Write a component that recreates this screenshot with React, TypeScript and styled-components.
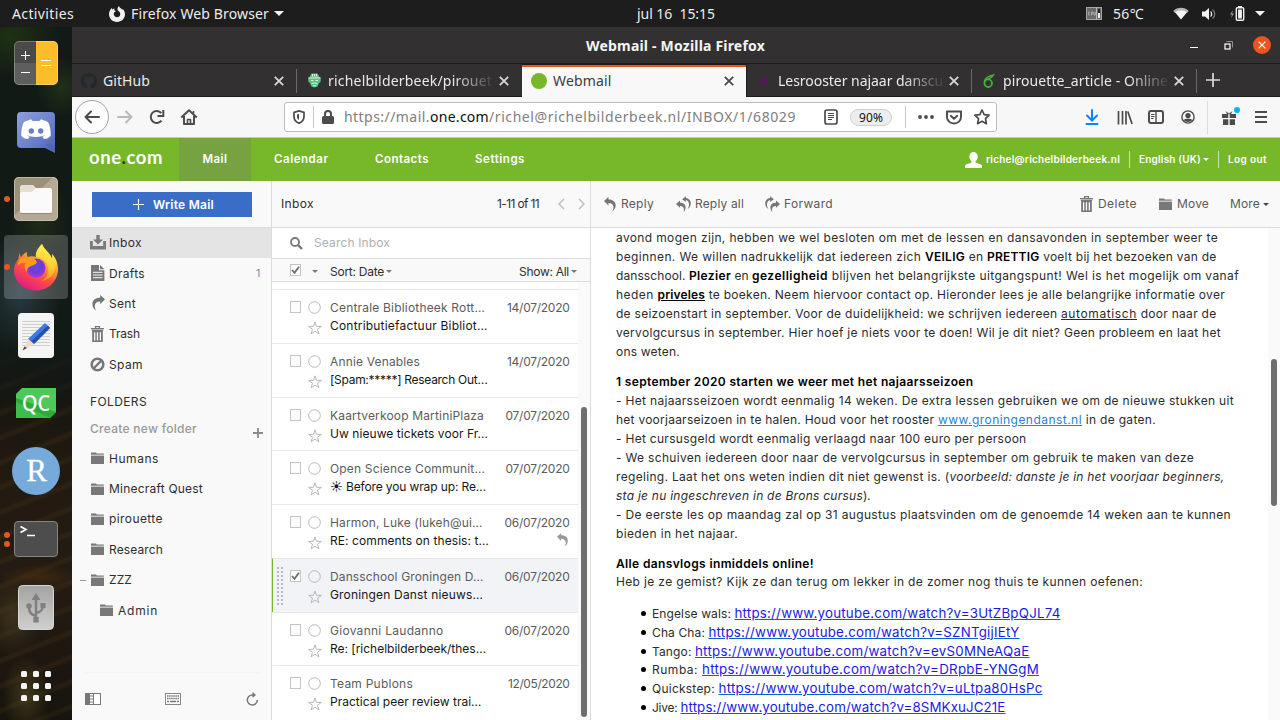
import React, { useLayoutEffect, useRef } from "react";
import styled, { createGlobalStyle, css } from "styled-components";

const SYSTEM = '"Noto Sans", "Open Sans", sans-serif';
const MAIL = 'Inter, "DejaVu Sans", sans-serif';

const Global = createGlobalStyle`
  * { box-sizing: border-box; }
  html, body { margin: 0; padding: 0; }
  body { width: 1280px; height: 720px; overflow: hidden; background: #1d1d1d; }
  svg { display: block; flex: none; }
`;

/* ---------- text that is tracked to an exact width ---------- */

const FitSpan = styled.span<{ $ml?: number }>`
  display: inline-block;
  flex: none;
  white-space: pre;
  margin-left: ${(p) => p.$ml || 0}px;
`;

type FitProps = {
  w: number;
  ml?: number;
  as?: any;
  children: React.ReactNode;
};

function Fit({ w, ml, as, children }: FitProps) {
  const ref = useRef<HTMLSpanElement>(null);
  useLayoutEffect(() => {
    const el = ref.current;
    if (!el) return;
    const n = (el.textContent || "").length || 1;
    let spacing = 0;
    for (let i = 0; i < 3; i++) {
      spacing += (w - el.getBoundingClientRect().width) / n;
      el.style.letterSpacing = `${spacing}px`;
    }
  }, [w]);
  return (
    <FitSpan ref={ref} $ml={ml} as={as}>
      {children}
    </FitSpan>
  );
}

/* ---------- desktop ---------- */

const Desktop = styled.div`
  width: 1280px;
  height: 720px;
  display: flex;
  flex-direction: column;
  overflow: hidden;
`;

const TopBar = styled.header`
  height: 27px;
  flex: none;
  display: flex;
  align-items: center;
  background: #1d1d1d;
  color: #ececec;
  font: 14px/26px ${SYSTEM};
`;

const Cell = styled.div<{ $w: number; $ml?: number }>`
  width: ${(p) => p.$w}px;
  flex: none;
  margin-left: ${(p) => p.$ml || 0}px;
  display: flex;
  justify-content: center;
  align-items: center;
  position: relative;
`;

const Below = styled.div`
  display: flex;
  height: 693px;
`;

const Dock = styled.nav`
  width: 72px;
  flex: none;
  padding-top: 2px;
  overflow: hidden;
  background:
    radial-gradient(ellipse 30px 40px at 40px 195px, rgba(44, 66, 24, 0.45), transparent),
    radial-gradient(ellipse 42px 60px at 20px 265px, rgba(58, 84, 100, 0.55), transparent),
    radial-gradient(ellipse 50px 40px at 10px 10px, rgba(40, 70, 16, 0.55), transparent),
    radial-gradient(ellipse 26px 30px at 62px 60px, rgba(46, 76, 22, 0.45), transparent),
    radial-gradient(ellipse 30px 40px at 14px 590px, rgba(78, 66, 34, 0.6), transparent),
    radial-gradient(ellipse 24px 40px at 26px 668px, rgba(98, 86, 36, 0.5), transparent),
    radial-gradient(ellipse 40px 12px at 40px 550px, rgba(100, 56, 18, 0.4), transparent),
    linear-gradient(rgba(18, 26, 22, 1) 0, rgba(18, 26, 22, 1) 320px, rgba(18, 26, 22, 0) 400px),
    repeating-linear-gradient(158deg, rgba(0, 0, 0, 0) 0 9px, rgba(90, 64, 28, 0.2) 12px 14px, rgba(0, 0, 0, 0) 17px 23px),
    linear-gradient(#12200f 0, #10180f 30%, #121a1d 44%, #16140f 50%, #211a10 64%, #241c12 80%, #17130e 100%);
`;

const DockSlot = styled.div<{ $last?: boolean }>`
  height: 68px;
  margin-top: ${(p) => (p.$last ? 11 : 0)}px;
  display: grid;
  grid-template-columns: 4px 64px 4px;
  align-items: center;
`;

const DockTile = styled.div<{ $active?: boolean }>`
  grid-column: 2;
  height: 64px;
  border-radius: 4px;
  background: ${(p) => (p.$active ? "rgba(255,255,255,0.2)" : "transparent")};
  display: flex;
  align-items: center;
  justify-content: center;
  position: relative;
`;

const DockDots = styled.div`
  position: absolute;
  left: 0;
  top: 0;
  height: 64px;
  display: flex;
  flex-direction: column;
  justify-content: center;
  gap: 3px;
`;

const DockDot = styled.i`
  width: 6px;
  height: 6px;
  border-radius: 50%;
  background: #e95420;
`;

/* ---------- browser window ---------- */

const Window = styled.main`
  width: 1208px;
  display: flex;
  flex-direction: column;
`;

const TitleBar = styled.div`
  height: 37px;
  flex: none;
  display: flex;
  align-items: center;
  background: #333031;
  border-bottom: 1px solid #1f1d1e;
  color: #f4f4f4;
  font: 700 14px/36px ${SYSTEM};
`;

const TitleText = styled.div`
  margin-left: 514px;
  padding-top: 1px;
`;

const CloseButton = styled.div`
  width: 18px;
  height: 18px;
  border-radius: 50%;
  background: #e95420;
  display: flex;
  align-items: center;
  justify-content: center;
`;

const TabStrip = styled.div`
  height: 33px;
  flex: none;
  display: flex;
  background: #333031;
  border-bottom: 1px solid #1c1a1b;
`;

const TabBox = styled.div<{ $active?: boolean }>`
  width: 225px;
  height: 33px;
  flex: none;
  display: grid;
  grid-template-columns: 9px 16px 6px 166px 20px 7px 1px;
  align-items: center;
  font: 14px/32px ${SYSTEM};
  color: #e9e9e9;
  ${(p) =>
    p.$active &&
    css`
      background: #f8f8f8;
      color: #3c3c3c;
      box-shadow: inset 0 1px #1d1b1c, inset -1px 0 #1d1b1c, inset 0 3px #e95420;
    `}
`;

const TabLabel = styled.div<{ $fade?: boolean }>`
  grid-column: 4;
  height: 32px;
  ${(p) => p.$fade && "mask-image: linear-gradient(to right, #000 125px, transparent 168px);"}
`;

const TabSep = styled.i<{ $on?: boolean }>`
  height: 24px;
  grid-column: 7;
  background: ${(p) => (p.$on ? "#6b696a" : "transparent")};
`;

const Toolbar = styled.div`
  height: 41px;
  flex: none;
  display: flex;
  align-items: center;
  background: #f7f7f7;
  border-bottom: 1px solid #c6c6c6;
  color: #555;
`;

const BackButton = styled.div`
  width: 34px;
  height: 34px;
  margin-left: 3px;
  border-radius: 50%;
  border: 1px solid #a5a5a5;
  background: #fdfdfd;
  display: flex;
  align-items: center;
  justify-content: center;
`;

const UrlBox = styled.div`
  width: 713px;
  height: 30px;
  margin-left: 86px;
  display: flex;
  align-items: center;
  background: #fff;
  border: 1px solid #bdbdbd;
  border-radius: 3px;
  color: #808080;
  font: 14px/28px ${SYSTEM};
  b { font-weight: 400; color: #0c0c0d; }
`;

const VLine = styled.i<{ $h: number; $ml?: number; $c?: string }>`
  width: 1px;
  flex: none;
  height: ${(p) => p.$h}px;
  margin-left: ${(p) => p.$ml || 0}px;
  background: ${(p) => p.$c || "#c9c9c9"};
`;

const Zoom = styled.div`
  width: 42px;
  height: 17px;
  margin-left: 12px;
  border-radius: 9px;
  border: 1px solid #cfcfcf;
  background: #ededed;
  color: #111;
  display: flex;
  justify-content: center;
  font: 12px/15px ${SYSTEM};
`;

const GiftDot = styled.i`
  position: absolute;
  right: -3px;
  top: -3px;
  width: 6px;
  height: 6px;
  border-radius: 50%;
  background: #00b3f4;
`;

/* ---------- webmail ---------- */

const GreenBar = styled.div`
  height: 43px;
  flex: none;
  display: flex;
  align-items: center;
  background: #76b82a;
  color: #fff;
  font: 600 11.5px/43px ${MAIL};
`;

const Logo = styled.div`
  width: 107px;
  padding: 0 0 4px 17px;
  font: 700 18.5px/39px Lato, sans-serif;
  i { color: #333; font-style: normal; }
`;

const NavItem = styled.div<{ $w: number; $active?: boolean }>`
  width: ${(p) => p.$w}px;
  height: 43px;
  display: flex;
  justify-content: center;
  background: ${(p) => (p.$active ? "#77a241" : "transparent")};
`;

const Account = styled.div`
  display: flex;
  align-items: center;
  font-size: 10px;
  margin-left: 428px;
`;

const MailApp = styled.div`
  height: 539px;
  display: flex;
  font: 12px/14px ${MAIL};
  color: #2e2e2e;
`;

const Sidebar = styled.aside`
  width: 200px;
  flex: none;
  display: flex;
  flex-direction: column;
  background: #f9f9f9;
  border-right: 1px solid #dcdcdc;
`;

const ComposeArea = styled.div`
  height: 47px;
  padding: 11px 0 0 20px;
  border-bottom: 1px solid #dcdcdc;
`;

const WriteButton = styled.div`
  width: 160px;
  height: 25px;
  display: flex;
  align-items: center;
  background: #3a6dc7;
  color: #fff;
  font-weight: 600;
`;

const Item = styled.div<{ $active?: boolean; $indent?: boolean }>`
  height: 30.4px;
  flex: none;
  display: grid;
  grid-template-columns: ${(p) => (p.$indent ? 26 : 17)}px 20px 144px;
  align-items: center;
  background: ${(p) => (p.$active ? "#e4e4e4" : "transparent")};
`;

const ItemIcon = styled.div`
  display: flex;
  justify-content: center;
  align-items: center;
  margin: -1px 2px 0 -1px;
`;

const ItemBody = styled.div`
  display: flex;
  align-items: center;
`;

const Count = styled.span`
  margin: 0 -9px 0 auto;
  width: 6px;
  color: #6c8fb0;
  font-size: 10.5px;
`;

const FolderTitle = styled.div`
  height: 27px;
  padding-left: 18px;
  margin-top: 8px;
  line-height: 28px;
`;

const CreateRow = styled.div`
  height: 28.5px;
  display: flex;
  padding-left: 18px;
  line-height: 27px;
  color: #989898;
  font-weight: 500;
  svg { margin: 13px 0 0 56px; }
`;

const SideFooter = styled.div`
  height: 48px;
  margin: auto 10px 0 13px;
  padding-top: 4px;
  display: grid;
  grid-template-columns: 80px 80px 16px;
  align-items: center;
  border-top: 1px solid #f4f4f4;
`;

const ListPane = styled.section`
  width: 319px;
  flex: none;
  display: flex;
  flex-direction: column;
  background: #fff;
  border-right: 1px solid #dcdcdc;
`;

const ListHead = styled.div`
  height: 47px;
  flex: none;
  display: flex;
  align-items: center;
  background: #f9f9f9;
  border-bottom: 1px solid #dcdcdc;
`;

const SearchRow = styled.div`
  height: 31px;
  flex: none;
  display: flex;
  align-items: center;
  border-bottom: 1px solid #dcdcdc;
  color: #b0b0b0;
`;

const SortRow = styled.div`
  height: 23px;
  flex: none;
  display: flex;
  align-items: center;
  background: #f9f9f9;
  border-bottom: 1px solid #dcdcdc;
  padding-top: 3px;
`;

const SortCheck = styled.div`
  width: 11px;
  margin: -4px 0 0 18px;
`;

const ListBody = styled.div`
  display: flex;
  height: 438px;
`;

const Rows = styled.div`
  width: 306px;
  padding-top: 7px;
`;

const Row = styled.div<{ $sel?: boolean }>`
  height: 53.75px;
  border-top: 1px solid #e8e8e8;
  border-left: 1px solid ${(p) => (p.$sel ? "#76b82a" : "transparent")};
  background: ${(p) => (p.$sel ? "#f2f3f7" : "#fff")};
  display: grid;
  grid-template-columns: 17px 12px 5px 15px 8px 159px 80.5px;
  grid-template-rows: 27px 18px;
`;

const Grip = styled.div`
  grid-row: 1 / 3;
  width: 6px;
  height: 38px;
  margin: 8px 0 0 4px;
  background-image: linear-gradient(#bcbcbc 2px, transparent 2px);
  background-size: 6px 4px;
  mask-image: linear-gradient(to right, #000 2px, transparent 2px 4px, #000 4px);
`;

const Check = styled.div`
  width: 11px;
  height: 12px;
  border: 1px solid #c4c4c4;
  background: #fcfcfc;
`;

const CheckCell = styled.div`
  grid-column: 2;
  grid-row: 1;
  padding-top: 11px;
`;

const MarkCell = styled.div<{ $row: number }>`
  grid-column: 4;
  grid-row: ${(p) => p.$row};
  display: flex;
  justify-content: center;
  padding-top: ${(p) => (p.$row === 1 ? 11 : 4)}px;
`;

const From = styled.div`
  grid-column: 6;
  grid-row: 1;
  padding-top: 11px;
  color: #5c5c5c;
`;

const Subject = styled.div`
  grid-column: 6;
  grid-row: 2;
  padding-top: 2px;
  color: #161616;
`;

const DateCell = styled.div`
  grid-column: 7;
  grid-row: 1;
  padding-top: 11px;
  text-align: right;
  color: #5c5c5c;
`;

const Replied = styled.div`
  grid-column: 7;
  grid-row: 2;
  display: flex;
  justify-content: flex-end;
  padding: 1px 1px 0 0;
`;

const Track = styled.div`
  width: 12px;
  background: #fafafa;
`;

const Thumb = styled.div<{ $top: number; $h: number }>`
  width: 6px;
  height: ${(p) => p.$h}px;
  margin: ${(p) => p.$top}px 0 0 3px;
  border-radius: 3px;
  background: #6e6e6e;
`;

const Reader = styled.section`
  width: 689px;
  display: flex;
  flex-direction: column;
  background: #fff;
`;

const Actions = styled.div`
  height: 47px;
  flex: none;
  display: flex;
  align-items: center;
  background: #f9f9f9;
  border-bottom: 1px solid #dcdcdc;
  color: #5a5a5a;
`;

const ReaderBody = styled.div`
  height: 492px;
  display: flex;
  overflow: hidden;
`;

const Article = styled.article`
  width: 677px;
  padding: 1px 0 0 25px;
  color: #2b2b2b;
  font: 12px/18.95px ${MAIL};
`;

const Block = styled.div<{ $mt?: number }>`
  margin-top: ${(p) => p.$mt || 0}px;
`;

const Line = styled.div`
  height: 18.95px;
  display: flex;
  white-space: pre;
`;

const Strong = styled.b`
  font-weight: 600;
  color: #000;
`;

const Under = styled.span`
  display: inline-block;
  text-decoration: underline;
`;

const StrongUnder = styled(Strong)`
  display: inline-block;
  text-decoration: underline;
`;

const Site = styled.a`
  color: #2a7fd0;
  text-decoration: underline;
`;

const Video = styled.a`
  font-size: 13.3px;
  color: #1a1ae6;
  text-decoration: underline;
  text-decoration-color: #0563c1;
`;

const BulletLine = styled.li`
  height: 18.85px;
  display: flex;
  align-items: baseline;
  list-style: none;
  &::before {
    content: "";
    width: 5px;
    height: 5px;
    margin: 0 6px 0 25px;
    border-radius: 50%;
    background: #000;
    transform: translateY(-2px);
  }
`;

const Bullets = styled.ul`
  margin: 11.5px 0 0;
  padding: 0;
`;

/* ---------- icons ---------- */

const Caret = ({ s = 6, c = "#777" }: { s?: number; c?: string }) => (
  <svg width={s} height={s / 2} viewBox="0 0 6 3">
    <path d="M0 0h6L3 3z" fill={c} />
  </svg>
);

const Cross = ({ c = "#e0e0e0", s = 10, w = 1.8 }: { c?: string; s?: number; w?: number }) => (
  <svg width={s} height={s} viewBox="0 0 10 10">
    <path d="M.8.8l8.4 8.4M9.2.8L.8 9.2" stroke={c} strokeWidth={w} />
  </svg>
);

const FolderIcon = () => (
  <svg width="13" height="12" viewBox="0 0 13 12">
    <path d="M0 1.2V0.4h5l.8 1h7v1.4H0z" fill="#787878" />
    <path d="M0 2.9h13v1H0z" fill="#bdbdbd" />
    <path d="M0 4h13v8H0z" fill="#787878" />
  </svg>
);

const TrashIcon = () => (
  <svg width="13" height="16" viewBox="0 0 13 16">
    <path d="M4.5 2V.6h4V2M0 2.600h13M.8 4.400h11.400" fill="none" stroke="#777" strokeWidth="1.2" />
    <path d="M1.200 5h10.600v11H1.200zM3 6.200v8.200h1.300V6.200zm2.800 0v8.200h1.300V6.200zm2.900 0v8.200H10V6.200z" fill="#777" fillRule="evenodd" />
  </svg>
);

const BanIcon = () => (
  <svg width="15" height="15" viewBox="0 0 15 15">
    <circle cx="7.5" cy="7.5" r="5.8" fill="none" stroke="#777" strokeWidth="2.6" />
    <path d="M11.500 3.500l-8 8" stroke="#777" strokeWidth="2.400" />
  </svg>
);

const InboxIcon = () => (
  <svg width="16" height="15" viewBox="0 0 16 15">
    <path d="M6.300 0h3.400v4.600H13L8 9.600 3 4.600h3.300z" fill="#7a7a7a" />
    <path d="M0 6h2.800v5h10.400V6H16v8.600H0z" fill="#7a7a7a" />
  </svg>
);

const DraftIcon = () => (
  <svg width="14" height="16" viewBox="0 0 14 16">
    <path d="M0 0h8v5.200h5.400V16H0z" fill="#777" />
    <path d="M9 0l4.400 4.300H9z" fill="#777" />
    <path d="M2 7.300h9.500M2 10h9.500M2 12.700h9.500" stroke="#f9f9f9" strokeWidth="1" />
  </svg>
);

const ReplyIcon = ({ flip, s = 14, c = "#757575" }: { flip?: boolean; s?: number; c?: string }) => (
  <svg width={s} height={(s * 16) / 14} viewBox="0 0 14 16">
    <path
      transform={flip ? "translate(14 0) scale(-1 1)" : undefined}
      d="M0 4.300L4.800 0v2.700c5 0 7.800 2.600 7.800 6.300 0 3-1.600 5.400-3.900 6.600 1.200-1.700 1.700-3.200 1.500-5-.3-2.600-2.200-4-5.400-4v2.600z"
      fill={c}
    />
  </svg>
);

const DoubleReply = ({ flip }: { flip?: boolean }) => (
  <svg width="15" height="16" viewBox="0 0 15 16">
    <g transform={flip ? "translate(15 0) scale(-1 1)" : undefined} fill="#757575">
      <path d="M0 8L4 4.600v2.200c3.600 0 5.600 1.900 5.600 4.700 0 1.900-.8 3.500-2 4.500.5-1.400.5-2.900.1-4-.5-1.300-1.700-2-3.700-2.100v1.800z" />
      <path d="M6.200 3.300L9.800.2v1.700c3.200.3 5 2.500 5 5.300 0 2.600-1.300 4.700-3.200 5.800 1-1.700 1.600-3.400 1.400-5.300-.3-2-1.300-3.400-3.200-3.800v2z" />
    </g>
  </svg>
);

const Star = () => (
  <svg width="14" height="14" viewBox="0 0 14 14">
    <path d="M7 .9l1.500 4.400 4.900.1-3.900 2.800 1.400 4.700L7 10.100l-3.900 2.800 1.400-4.700L.6 5.400l4.900-.1z" fill="none" stroke="#b8b8b8" strokeWidth="1" />
  </svg>
);

const Dot = () => (
  <svg width="13" height="13" viewBox="0 0 13 13">
    <circle cx="6.500" cy="6.500" r="5.800" fill="none" stroke="#b8b8b8" />
  </svg>
);

const Tick = () => (
  <svg width="9" height="10" viewBox="0 0 9 10">
    <path d="M1 5l2.500 2.800L8 1.800" fill="none" stroke="#6d6d6d" strokeWidth="1.800" />
  </svg>
);

const CalcIcon = () => (
  <svg width="44" height="44" viewBox="0 0 44 44">
    <defs><clipPath id="calc"><rect width="44" height="44" rx="5" /></clipPath></defs>
    <g clipPath="url(#calc)">
      <path d="M0 0h22v22H0z" fill="#4a4a4a" />
      <path d="M0 22h22v22H0z" fill="#5e5e5e" />
      <path d="M22 0h22v44H22z" fill="#fdbc2c" />
    </g>
    <rect x=".5" y=".5" width="43" height="43" rx="4.500" fill="none" stroke="#fff" strokeOpacity=".25" />
    <path d="M7 14.500h9M11.500 10v9M7 31.500h9M27 19.500h10M27 24.500h10" stroke="#fff" />
  </svg>
);

const DiscordIcon = () => (
  <svg width="38" height="44" viewBox="0 -3 38 44">
    <defs><linearGradient id="dis" x2="1" y2="1"><stop stopColor="#8fa0dc" /><stop offset=".6" stopColor="#6a7dc9" /><stop offset="1" stopColor="#4a63b4" /></linearGradient></defs>
    <path d="M4 0h30a4 4 0 014 4v37L28 36H4a4 4 0 01-4-4V4a4 4 0 014-4z" fill="url(#dis)" />
    <path d="M12 8l2-.7 1.600 1.700h6.800L24 7.300l2 .7c3 .8 4.800 1.800 5.500 2.700 1.600 3.800 2.400 8 2.200 13-1.600 2-4 3.300-6.700 3.300l-1.700-2.200c1-.3 2-1 2.700-1.600-5.500 2.300-12.500 2.300-18 0 .7.600 1.700 1.300 2.700 1.600L11 27c-2.700 0-5.100-1.300-6.700-3.300-.2-5 .6-9.200 2.200-13C7.200 9.800 9 8.800 12 8z" fill="#fff" />
    <circle cx="14.300" cy="19" r="2.700" fill="#6a7dc9" /><circle cx="23.700" cy="19" r="2.700" fill="#6a7dc9" />
    <path d="M28 32l10 9V33z" fill="#4c66b8" />
  </svg>
);

const FilesIcon = () => (
  <svg width="44" height="44" viewBox="0 0 44 44">
    <rect width="44" height="44" rx="5" fill="#b3a994" />
    <path d="M5 0h34L0 39V5a5 5 0 015-5z" fill="#91886f" opacity=".7" />
    <rect x=".5" y=".5" width="43" height="43" rx="4.500" fill="none" stroke="#d0c8b6" strokeOpacity=".7" />
    <path d="M6 10a2 2 0 012-2h11l3 3v6H6z" fill="#e4dfd2" />
    <path d="M8 15h10l4-4h14a2 2 0 012 2v21a2 2 0 01-2 2H8a2 2 0 01-2-2V16z" fill="#fafafa" />
    <path d="M7 36.500h30" stroke="#7c735f" strokeOpacity=".5" />
  </svg>
);

const FirefoxIcon = () => (
  <svg width="46" height="47" viewBox="0 0 46 47">
    <defs>
      <linearGradient id="ff1" x1=".8" y1="0" x2=".25" y2="1"><stop offset=".08" stopColor="#fff44f" /><stop offset=".35" stopColor="#ffa930" /><stop offset=".62" stopColor="#ff5040" /><stop offset="1" stopColor="#e3158b" /></linearGradient>
      <radialGradient id="ff2" cx=".5" cy=".4" r=".65"><stop stopColor="#5d4fe0" /><stop offset=".5" stopColor="#7039d8" /><stop offset="1" stopColor="#a63ae0" /></radialGradient>
      <linearGradient id="ff3" x1=".7" y1="0" x2=".6" y2="1"><stop stopColor="#fff44f" /><stop offset=".6" stopColor="#ffd335" /><stop offset="1" stopColor="#ff9a2b" /></linearGradient>
    </defs>
    <path d="M7 9c-1 2-1.500 4-1.400 6C2 19 1 23 1 26c0 11.500 9.500 20.500 22 20.500S45 37 45 25c0-7-3-12-6-15 0 2 .5 3 0 5C37 8 31 6 29 0c-4 4-6 8-6 13-3-1-6-1-8 0-1-1-1.500-3-1-5-3 1-5 4-6 5-.8-1-1-2.500-1-4z" fill="url(#ff1)" />
    <circle cx="23" cy="24" r="9.600" fill="url(#ff2)" />
    <path d="M29 0c-5 5-7 9-6 13 6 0 11 4 12 11 1 6-2 11-7 13 9-1 15-8 15-17 0-4-2-8-4-10 .5 2 .5 4 0 5C37 9 31 6 29 0z" fill="url(#ff3)" opacity=".9" />
    <path d="M14 14c5-2 8 1 10 4-1 3-4 3-6 4-3 1-4 3-4 6-3-3-3-7-1-9-3-1-6 0-8 3 0-4 1-6 2-7 2-2 5-2 7-1z" fill="#ff9a1f" />
  </svg>
);

const EditorIcon = () => (
  <svg width="36" height="45" viewBox="0 0 36 45">
    <rect width="36" height="45" rx="4" fill="#f4f4f4" />
    <path d="M4 8.500h28M4 11.500h28M4 14.500h28M4 17.500h28M4 20.500h28M4 23.500h28M4 26.500h28M4 29.500h28M4 32.500h28" stroke="#cfcfcf" />
    <path d="M27 10l5 5-16 16-6-5z" fill="#3d78e8" />
    <path d="M30 12.500l2 2.500-16 16-3-2.500z" fill="#2450b0" />
    <path d="M10 26l6 5-10 5.500z" fill="#f7d9bd" /><path d="M6.500 33.500L4.500 37.500l4.500-2.500z" fill="#444" />
  </svg>
);

const SysText = styled.text`
  font-family: ${SYSTEM};
  font-weight: 500;
`;
const SerifText = styled.text`
  font-family: "Liberation Serif", serif;
`;

const QtIcon = () => (
  <svg width="40" height="30" viewBox="0 0 40 30">
    <path d="M6 0h34v24l-6 6H0V6z" fill="#4cc958" />
    <path d="M0 10l40 14-6 6H0z" fill="#2bab39" />
    <path d="M0 14l34 16H0z" fill="#3dbd4a" />
    <SysText x="20" y="22.500" fontSize="21" fill="#fff" textAnchor="middle" textLength="28" lengthAdjust="spacingAndGlyphs">QC</SysText>
  </svg>
);

const RIcon = () => (
  <svg width="48" height="48" viewBox="0 0 48 48">
    <circle cx="24" cy="24" r="24" fill="#75aadb" />
    <SerifText x="24.500" y="33.500" fontSize="31" fill="#fff" stroke="#fff" strokeWidth=".3" textAnchor="middle">R</SerifText>
  </svg>
);

const TerminalIcon = () => (
  <svg width="44" height="36" viewBox="0 0 44 36">
    <rect x=".5" y=".5" width="43" height="35" rx="3.500" fill="#4d4d4d" stroke="#858585" />
    <path d="M6.500 5.500l5.500 3-5.500 3M13 14.500h8" stroke="#fff" strokeWidth="1.700" fill="none" />
  </svg>
);

const UsbIcon = () => (
  <svg width="36" height="45" viewBox="0 0 36 45">
    <defs><linearGradient id="usb" x2="0" y2="1"><stop stopColor="#a3a3a3" /><stop offset="1" stopColor="#cfcfcf" /></linearGradient></defs>
    <rect x=".5" y=".5" width="35" height="44" rx="4" fill="url(#usb)" stroke="#d6d6d6" />
    <path d="M18 14v20M18 31c-5-1-7-4-7-9M18 28c5-1 7-3 7-8" stroke="#808080" strokeWidth="2.600" fill="none" />
    <path d="M18 8l4.500 7h-9z" fill="#808080" /><circle cx="11" cy="21" r="2.800" fill="#808080" /><path d="M22.500 18h5v5h-5zM15.300 32h5.400v5.500h-5.400z" fill="#808080" />
  </svg>
);

const AppsIcon = () => (
  <svg width="30" height="30" viewBox="0 0 30 30" fill="#f4f4f4">
    {[0, 12, 24].map((y) => [0, 12, 24].map((x) => <rect key={`${x}-${y}`} x={x} y={y} width="6" height="6" rx="1.500" />))}
  </svg>
);

const GitHubMark = () => (
  <svg width="16" height="16" viewBox="0 0 16 16" fill="#22272b">
    <path d="M8 0C3.580 0 0 3.580 0 8c0 3.540 2.290 6.530 5.470 7.590.4.070.55-.17.55-.38 0-.19-.01-.82-.01-1.490-2.010.37-2.530-.49-2.690-.94-.09-.23-.48-.94-.82-1.130-.28-.15-.68-.52-.01-.53.63-.01 1.080.58 1.230.82.72 1.210 1.870.87 2.330.66.070-.52.28-.87.51-1.070-1.780-.2-3.640-.89-3.640-3.950 0-.87.31-1.590.82-2.150-.08-.2-.36-1.020.08-2.120 0 0 .67-.21 2.200.82.64-.18 1.320-.27 2-.27s1.360.09 2 .27c1.530-1.040 2.200-.82 2.200-.82.44 1.100.16 1.920.08 2.120.51.56.82 1.270.82 2.150 0 3.070-1.870 3.750-3.650 3.950.29.25.54.73.54 1.480 0 1.070-.01 1.930-.01 2.200 0 .21.15.46.55.38A8.010 8.010 0 0016 8c0-4.420-3.580-8-8-8z" />
  </svg>
);

const TravisIcon = () => (
  <svg width="15" height="15" viewBox="0 0 15 15">
    <path d="M4.500.5h6l2 3.500 1.500.5-.5 4.500-1.500 1-1.500 3.500-3 1-3-1L3 10 1.500 9 1 4.500 2.500 4z" fill="#5cc083" />
    <path d="M5.500 1v2.500M7.500 1v2.500M9.500 1v2.500M2 5h11M4 7.500h2.500M8.500 7.500H11M4.500 11c1.500-1.500 4.500-1.500 6 0M6 12.700h3" stroke="#e9f8ee" strokeWidth=".9" fill="none" />
  </svg>
);

const OverleafIcon = () => (
  <svg width="12" height="14" viewBox="0 0 12 14" fill="none" stroke="#46ad3f" strokeWidth="1.800">
    <circle cx="5.200" cy="9.200" r="3.800" />
    <path d="M1.500 8.500C1.500 5 4 2.200 10.500 1 9.500 3 7.500 3.800 5 5.200" strokeWidth="1.500" />
  </svg>
);

/* ---------- sections ---------- */

const dockApps: { icon: React.ReactNode; dots?: number; active?: boolean; last?: boolean }[] = [
  { icon: <CalcIcon /> },
  { icon: <DiscordIcon /> },
  { icon: <FilesIcon />, dots: 1 },
  { icon: <FirefoxIcon />, dots: 1, active: true },
  { icon: <EditorIcon /> },
  { icon: <QtIcon /> },
  { icon: <RIcon /> },
  { icon: <TerminalIcon />, dots: 2 },
  { icon: <UsbIcon /> },
  { icon: <AppsIcon />, last: true },
];

const SystemBar = () => (
  <TopBar>
    <Fit w={62} ml={12}>Activities</Fit>
    <Cell $w={16} $ml={35}>
      <svg width="16" height="16" viewBox="0 0 16 16">
        <path d="M1.500 3.500l1-1.500.8 1.500L5.200 2.300l.3 2.200L7 5 5 6.800C4.600 8.500 5 9.600 6 10.400c1.700 1.300 4.200.8 5-1C11.800 7.500 10.800 5.600 9 4.800 8 3 8.500 1.500 10 0c.5 2 2 2 3.500 4l.3-1.300C15.300 4.500 16 6.500 16 8.300 16 12.600 12.500 16 8 16S0 12.600 0 8.300C0 6.500.5 5 1.500 3.500z" fill="#f2f2f2" />
      </svg>
    </Cell>
    <Fit w={138} ml={6}>Firefox Web Browser</Fit>
    <Cell $w={10} $ml={5}><Caret s={10} c="#f2f2f2" /></Cell>
    <Fit w={78} ml={353}>jul 16  15:15</Fit>
    <Cell $w={16} $ml={371}>
      <svg width="16" height="13" viewBox="0 0 16 13">
        <rect x=".5" y=".5" width="15" height="12" fill="#6b6b6b" stroke="#a5a5a5" />
        <path d="M10.500 0v13" stroke="#b5b5b5" /><path d="M12 2h2v4h-2z" fill="#222" /><path d="M12 6h2v5h-2z" fill="#eee" />
        <path d="M4 5H2.500v3H4M5.500 8.500V5H7v2H5.500M8 5v3h1.500V5" stroke="#bbb" strokeWidth=".7" fill="none" />
      </svg>
    </Cell>
    <Fit w={31} ml={11}>56℃</Fit>
    <Cell $w={16} $ml={29}>
      <svg width="16" height="13" viewBox="0 0 16 13">
        <path d="M.3 4C4.500-.3 11.500-.3 15.700 4L14 6C10.500 3 5.500 3 2 6z" fill="#b5b5b5" /><path d="M2 5.300c3.500-2.800 8.500-2.800 12 0L8 12.500z" fill="#f5f5f5" />
      </svg>
    </Cell>
    <Cell $w={16} $ml={12}>
      <svg width="16" height="14" viewBox="0 0 16 14">
        <path d="M1 4.500h3L8 1v12L4 9.500H1z" fill="#f2f2f2" />
        <path d="M9.500 4.500c1.500 1 1.500 4 0 5" fill="none" stroke="#eee" strokeWidth="1.300" />
        <path d="M11.500 2.500c3 2 3 7 0 9" fill="none" stroke="#777" strokeWidth="1.300" />
      </svg>
    </Cell>
    <Cell $w={16} $ml={12}>
      <svg width="16" height="15" viewBox="0 0 16 15">
        <path d="M4 4L1 8.500h2L2 12l3-4.500H3z" fill="#999" />
        <rect x="7.300" y="1.800" width="7.400" height="12.400" rx="1" fill="none" stroke="#f2f2f2" strokeWidth="1.400" /><path d="M9 0h4v1.500H9zM9.100 3.600h3.800v8.800H9.100z" fill="#f2f2f2" />
      </svg>
    </Cell>
    <Cell $w={10} $ml={10}><Caret s={10} c="#f2f2f2" /></Cell>
  </TopBar>
);

const Tab = ({ icon, label, w, active, sep, fade }: { icon: React.ReactNode; label: string; w: number; active?: boolean; sep?: boolean; fade?: boolean }) => (
  <TabBox $active={active}>
    <i />
    <Cell $w={16}>{icon}</Cell>
    <TabLabel $fade={fade}><Fit w={w}>{label}</Fit></TabLabel>
    <Cell $w={20}><Cross c={active ? "#4a4a4a" : "#d8d8d8"} /></Cell>
    <TabSep $on={sep} />
  </TabBox>
);

const BrowserChrome = () => (
  <>
    <TitleBar>
      <TitleText><Fit w={179}>Webmail - Mozilla Firefox</Fit></TitleText>
      <Cell $w={10} $ml={424}><svg width="8" height="8"><path d="M0 6.500h8" stroke="#fff" /></svg></Cell>
      <Cell $w={10} $ml={24}>
        <svg width="9" height="9" viewBox="0 0 9 9" fill="none"><path d="M2.500 .5h6v6" stroke="#8f8f8f" /><rect x="1" y="3" width="5" height="5" stroke="#fff" strokeWidth="1.200" /></svg>
      </Cell>
      <Cell $w={18} $ml={20}><CloseButton><Cross c="#fff" s={8} w={1.600} /></CloseButton></Cell>
    </TitleBar>
    <TabStrip>
      <Tab icon={<GitHubMark />} label="GitHub" w={47} sep />
      <Tab icon={<TravisIcon />} label="richelbilderbeek/pirouet" w={164} fade />
      <Tab icon={<svg width="16" height="16"><circle cx="8" cy="8" r="8" fill="#76b82a" /></svg>} label="Webmail" w={58.500} active />
      <Tab icon={<svg width="16" height="16" viewBox="0 0 16 16"><path d="M9 3l2-1M7 8c3-2 4 0 3 2s-4 4-5 2 1-4 4-8" fill="none" stroke="#5e1163" strokeWidth="1.600" /></svg>} label="Lesrooster najaar danscu" w={165} sep fade />
      <Tab icon={<OverleafIcon />} label="pirouette_article - Online" w={165} sep fade />
      <Cell $w={30} $ml={1}><svg width="14" height="14" viewBox="0 0 14 14"><path d="M0 7h14M7 0v14" stroke="#ddd" strokeWidth="1.700" /></svg></Cell>
    </TabStrip>
    <Toolbar>
      <BackButton>
        <svg width="16" height="14" viewBox="0 0 16 14" fill="none" stroke="#4b4b4b" strokeWidth="2" strokeLinecap="round" strokeLinejoin="round"><path d="M15 7H1.500M7 1.500L1.500 7 7 12.500" /></svg>
      </BackButton>
      <Cell $w={16} $ml={8}>
        <svg width="16" height="14" viewBox="0 0 16 14" fill="none" stroke="#b9b9b9" strokeWidth="2" strokeLinecap="round" strokeLinejoin="round"><path d="M1 7h13.500M9 1.500L14.500 7 9 12.500" /></svg>
      </Cell>
      <Cell $w={16} $ml={16}>
        <svg width="16" height="16" viewBox="0 0 16 16" fill="none" stroke="#4b4b4b" strokeWidth="2"><path d="M12.500 11.600A6 6 0 1 1 12.300 4" /><path d="M14.300 1v6H8.500" /></svg>
      </Cell>
      <Cell $w={18} $ml={15}>
        <svg width="18" height="16" viewBox="0 0 18 16" fill="none" stroke="#4b4b4b" strokeWidth="2" strokeLinejoin="round"><path d="M1.200 8.500L9 1.200l7.800 7.300M4 7v8h10V7" /><path d="M7.500 15v-4.500h3V15M13.500 2v2.500" strokeWidth="1.600" /></svg>
      </Cell>
      <UrlBox>
        <Cell $w={14} $ml={7}>
          <svg width="12" height="14" viewBox="0 0 12 14" fill="none" stroke="#4b4b4b" strokeWidth="1.700"><path d="M6 .9l5 1.500v4C11 9.800 9 12 6 13.100 3 12 1 9.800 1 6.400v-4z" /><path d="M6 4v6C4.500 9 4 8 4 6.500V4.500z" fill="#4b4b4b" stroke="none" /></svg>
        </Cell>
        <VLine $h={22} $ml={7} />
        <Cell $w={14} $ml={7}>
          <svg width="12" height="14" viewBox="0 0 12 14"><rect y="6" width="12" height="8" rx="1.500" fill="#4b4b4b" /><path d="M3 6.500V4a3 3 0 016 0v2.500" fill="none" stroke="#4b4b4b" strokeWidth="2" /></svg>
        </Cell>
        <Fit w={86} ml={9}>https://mail.</Fit>
        <Fit w={59} as="b">one.com</Fit>
        <Fit w={307}>/richel@richelbilderbeek.nl/INBOX/1/68029</Fit>
        <Cell $w={14} $ml={28}>
          <svg width="14" height="16" viewBox="0 0 14 16" fill="none" stroke="#4b4b4b"><rect x="1" y="1" width="12" height="14" rx="2" strokeWidth="1.700" /><path d="M4 4.500h6M4 6.500h6M4 8.500h6M4 10.500h4" /></svg>
        </Cell>
        <Zoom><Fit w={24}>90%</Fit></Zoom>
        <VLine $h={22} $ml={13} />
        <Cell $w={16} $ml={12}>
          <svg width="16" height="4" viewBox="0 0 16 4" fill="#4b4b4b"><circle cx="2" cy="2" r="1.900" /><circle cx="8" cy="2" r="1.900" /><circle cx="14" cy="2" r="1.900" /></svg>
        </Cell>
        <Cell $w={16} $ml={12}>
          <svg width="16" height="15" viewBox="0 0 16 15" fill="none" stroke="#4b4b4b" strokeWidth="1.900" strokeLinecap="round" strokeLinejoin="round"><path d="M1 1.500h14V7a7 6.500 0 01-14 0z" /><path d="M4.800 5.800L8 8.800l3.200-3" /></svg>
        </Cell>
        <Cell $w={16} $ml={12}>
          <svg width="16" height="16" viewBox="0 0 16 16" fill="none" stroke="#4b4b4b" strokeWidth="1.700" strokeLinejoin="round"><path d="M8 1l2.200 4.600 4.900.6-3.600 3.500.9 5L8 12.300l-4.400 2.400.9-5L.9 6.200l4.900-.6z" /></svg>
        </Cell>
      </UrlBox>
      <Cell $w={16} $ml={87}>
        <svg width="14" height="16" viewBox="0 0 14 16" fill="none" stroke="#0a84ff" strokeWidth="2" strokeLinecap="round"><path d="M7 1v10M2 6.500l5 5 5-5M1.500 15h11" /></svg>
      </Cell>
      <Cell $w={16} $ml={17}>
        <svg width="16" height="15" viewBox="0 0 16 15" stroke="#4b4b4b" strokeWidth="1.700"><path d="M1.500 1v13.500M5.500 1v13.500M9 1v13.500M10.800 1.500l4.300 12.500" /></svg>
      </Cell>
      <Cell $w={16} $ml={15}>
        <svg width="16" height="14" viewBox="0 0 16 14" fill="none" stroke="#4b4b4b"><rect x="1" y="1" width="14" height="12" rx="2" strokeWidth="2" /><path d="M8 1v12" strokeWidth="1.400" /><path d="M3 4.500h3.500M3 6.500h3.500M3 8.500h2.500" /></svg>
      </Cell>
      <Cell $w={16} $ml={16}>
        <svg width="14" height="14" viewBox="0 0 16 16" fill="#4b4b4b"><circle cx="8" cy="8" r="7" fill="none" stroke="#4b4b4b" strokeWidth="1.600" /><circle cx="8" cy="6.300" r="3" /><path d="M3.200 11.500c1-2 8.600-2 9.600 0-1.500 3-8 3-9.600 0z" /></svg>
      </Cell>
      <VLine $h={33} $ml={11} $c="#dcdcdc" />
      <Cell $w={16} $ml={13}>
        <svg width="14" height="15" viewBox="0 0 14 15" fill="#4b4b4b"><path d="M0 4h6.300v4H0zM7.700 4H14v4H7.700zM1 9.200h5.300V15H1zM7.700 9.200H13V15H7.700zM3.500 1L7 3.500 10.500 1 9 4H5z" /></svg>
        <GiftDot />
      </Cell>
      <Cell $w={16} $ml={16}>
        <svg width="12" height="12" viewBox="0 0 12 12" stroke="#4b4b4b" strokeWidth="2"><path d="M0 1h12M0 6h12M0 11h12" /></svg>
      </Cell>
    </Toolbar>
  </>
);

const MailHeader = () => (
  <GreenBar>
    <Logo><Fit w={74}>one<i>.</i>com</Fit></Logo>
    <NavItem $w={72} $active><Fit w={25}>Mail</Fit></NavItem>
    <Fit w={54.500} ml={23}>Calendar</Fit>
    <Fit w={54} ml={46.500}>Contacts</Fit>
    <Fit w={50} ml={46}>Settings</Fit>
    <Account>
      <Cell $w={17} $ml={12}>
        <svg width="17" height="16" viewBox="0 0 17 16" fill="#fff"><ellipse cx="8.500" cy="4.800" rx="4.200" ry="4.800" /><path d="M6.500 8h4v2.500c2 1 5.500 1.500 6.500 3V16H0v-2.500c1-1.500 4.500-2 6.500-3z" /></svg>
      </Cell>
      <Fit w={134} ml={4}>richel@richelbilderbeek.nl</Fit>
      <VLine $h={17} $ml={9} $c="rgba(255,255,255,.6)" />
      <Fit w={62} ml={9}>English (UK)</Fit>
      <Cell $w={6} $ml={2}><Caret c="#fff" /></Cell>
      <VLine $h={17} $ml={9} $c="rgba(255,255,255,.6)" />
      <Fit w={39} ml={9}>Log out</Fit>
    </Account>
  </GreenBar>
);

const mailboxes = [
  { icon: <InboxIcon />, label: "Inbox", w: 33, active: true },
  { icon: <DraftIcon />, label: "Drafts", w: 36, count: 1 },
  { icon: <ReplyIcon flip />, label: "Sent", w: 27 },
  { icon: <TrashIcon />, label: "Trash", w: 31 },
  { icon: <BanIcon />, label: "Spam", w: 34 },
];

const folders = [
  { label: "Humans", w: 50 },
  { label: "Minecraft Quest", w: 94 },
  { label: "pirouette", w: 54 },
  { label: "Research", w: 54 },
  { label: "ZZZ", w: 23, open: true },
  { label: "Admin", w: 40, indent: true },
];

const OpenMark = styled.i`
  width: 6px;
  height: 1px;
  margin-left: 8px;
  background: #999;
`;

const MailSidebar = () => (
  <Sidebar>
    <ComposeArea>
      <WriteButton>
        <Cell $w={12} $ml={40}><svg width="11" height="11"><path d="M5.500 0v11M0 5.500h11" stroke="#fff" strokeWidth="1.200" /></svg></Cell>
        <Fit w={61} ml={9}>Write Mail</Fit>
      </WriteButton>
    </ComposeArea>
    {mailboxes.map((m) => (
      <Item key={m.label} $active={m.active}>
        <i />
        <ItemIcon>{m.icon}</ItemIcon>
        <ItemBody><Fit w={m.w}>{m.label}</Fit>{m.count && <Count>{m.count}</Count>}</ItemBody>
      </Item>
    ))}
    <FolderTitle><Fit w={57}>FOLDERS</Fit></FolderTitle>
    <CreateRow>
      <Fit w={107}>Create new folder</Fit>
      <svg width="10" height="10"><path d="M5 0v10M0 5h10" stroke="#8a8a8a" strokeWidth="1.800" /></svg>
    </CreateRow>
    {folders.map((f) => (
      <Item key={f.label} $indent={f.indent}>
        {f.open ? <OpenMark /> : <i />}
        <ItemIcon><FolderIcon /></ItemIcon>
        <ItemBody><Fit w={f.w}>{f.label}</Fit></ItemBody>
      </Item>
    ))}
    <SideFooter>
      <svg width="16" height="12" viewBox="0 0 16 12"><rect x=".5" y=".5" width="15" height="11" fill="#fff" stroke="#777" /><path d="M0 0h5v12H0z" fill="#777" /><path d="M8.500 0v12M5 3h3M5 6h3M5 9h3" stroke="#777" /></svg>
      <svg width="16" height="12" viewBox="0 0 16 12"><rect x=".5" y=".5" width="15" height="11" fill="#fff" stroke="#888" /><path d="M2 3h12M2 5.500h12" stroke="#777" strokeWidth="1.400" strokeDasharray="1.500 .6" /><path d="M2 8.500h2M5 8.500h6M12 8.500h2" stroke="#777" strokeWidth="1.400" /></svg>
      <svg width="14" height="14" viewBox="0 0 14 14"><path d="M12.300 8A5 5 0 11 7.300 3H8.500" fill="none" stroke="#777" strokeWidth="1.500" /><path d="M7.500 0l3.500 3-3.500 3z" fill="#777" /></svg>
    </SideFooter>
  </Sidebar>
);

type Message = { from: string; fw: number; subject: string; sw: number; date: string; dw: number; replied?: boolean; selected?: boolean };

const messages: Message[] = [
  { from: "Centrale Bibliotheek Rott…", fw: 155, subject: "Contributiefactuur Bibliot…", sw: 157.500, date: "14/07/2020", dw: 62.500 },
  { from: "Annie Venables", fw: 90, subject: "[Spam:*****] Research Out…", sw: 157.500, date: "14/07/2020", dw: 62.500 },
  { from: "Kaartverkoop MartiniPlaza", fw: 154, subject: "Uw nieuwe tickets voor Fr…", sw: 158, date: "07/07/2020", dw: 64 },
  { from: "Open Science Communit…", fw: 155, subject: "☀ Before you wrap up: Re…", sw: 156, date: "07/07/2020", dw: 64 },
  { from: "Harmon, Luke (lukeh@ui…", fw: 152.500, subject: "RE: comments on thesis: t…", sw: 159, date: "06/07/2020", dw: 65, replied: true },
  { from: "Dansschool Groningen D…", fw: 153.500, subject: "Groningen Danst nieuws…", sw: 153, date: "06/07/2020", dw: 65, selected: true },
  { from: "Giovanni Laudanno", fw: 113.500, subject: "Re: [richelbilderbeek/thes…", sw: 156, date: "06/07/2020", dw: 65 },
  { from: "Team Publons", fw: 83, subject: "Practical peer review trai…", sw: 151.500, date: "12/05/2020", dw: 61.500 },
];

const MessageRow = ({ m }: { m: Message }) => (
  <Row $sel={m.selected}>
    {m.selected && <Grip />}
    <CheckCell><Check>{m.selected && <Tick />}</Check></CheckCell>
    <MarkCell $row={1}><Dot /></MarkCell>
    <MarkCell $row={2}><Star /></MarkCell>
    <From><Fit w={m.fw}>{m.from}</Fit></From>
    <DateCell><Fit w={m.dw}>{m.date}</Fit></DateCell>
    <Subject><Fit w={m.sw}>{m.subject}</Fit></Subject>
    {m.replied && <Replied><ReplyIcon s={12} c="#999" /></Replied>}
  </Row>
);

const MessageList = () => (
  <ListPane>
    <ListHead>
      <Fit w={33} ml={9}>Inbox</Fit>
      <Fit w={42} ml={183}>1-11 of 11</Fit>
      <Cell $w={8} $ml={18}><svg width="7" height="12" viewBox="0 0 7 12"><path d="M6 1L1 6l5 5" fill="none" stroke="#bbb" strokeWidth="1.400" /></svg></Cell>
      <Cell $w={8} $ml={12}><svg width="7" height="12" viewBox="0 0 7 12"><path d="M1 1l5 5-5 5" fill="none" stroke="#bbb" strokeWidth="1.400" /></svg></Cell>
    </ListHead>
    <SearchRow>
      <Cell $w={13} $ml={18}><svg width="13" height="13" viewBox="0 0 13 13" fill="none" stroke="#777"><circle cx="5" cy="5" r="4" strokeWidth="1.800" /><path d="M8 8l4 4" strokeWidth="2.400" /></svg></Cell>
      <Fit w={76} ml={11}>Search Inbox</Fit>
    </SearchRow>
    <SortRow>
      <SortCheck><Check><Tick /></Check></SortCheck>
      <Cell $w={6} $ml={11}><Caret /></Cell>
      <Fit w={54} ml={12}>Sort: Date</Fit>
      <Cell $w={6} $ml={2}><Caret /></Cell>
      <Fit w={50} ml={127}>Show: All</Fit>
      <Cell $w={6} $ml={2}><Caret /></Cell>
    </SortRow>
    <ListBody>
      <Rows>{messages.map((m) => <MessageRow key={m.from} m={m} />)}</Rows>
      <Track><Thumb $top={125} $h={310} /></Track>
    </ListBody>
  </ListPane>
);

const videos = [
  { label: "Engelse wals: ", lw: 82.500, url: "https://www.youtube.com/watch?v=3UtZBpQJL74", w: 326 },
  { label: "Cha Cha: ", lw: 56.500, url: "https://www.youtube.com/watch?v=SZNTgijIEtY", w: 311 },
  { label: "Tango: ", lw: 43, url: "https://www.youtube.com/watch?v=evS0MNeAQaE", w: 334.500 },
  { label: "Rumba: ", lw: 50, url: "https://www.youtube.com/watch?v=DRpbE-YNGgM", w: 337 },
  { label: "Quickstep: ", lw: 66.500, url: "https://www.youtube.com/watch?v=uLtpa80HsPc", w: 324 },
  { label: "Jive: ", lw: 28.500, url: "https://www.youtube.com/watch?v=8SMKxuJC21E", w: 325 },
];

const MailReader = () => (
  <Reader>
    <Actions>
      <Cell $w={14} $ml={12}><ReplyIcon s={13} /></Cell>
      <Fit w={33} ml={4}>Reply</Fit>
      <Cell $w={16} $ml={21}><DoubleReply /></Cell>
      <Fit w={49} ml={4}>Reply all</Fit>
      <Cell $w={16} $ml={20}><DoubleReply flip /></Cell>
      <Fit w={49} ml={4}>Forward</Fit>
      <Cell $w={14} $ml={246}><TrashIcon /></Cell>
      <Fit w={39} ml={5}>Delete</Fit>
      <Cell $w={14} $ml={21}><FolderIcon /></Cell>
      <Fit w={32} ml={5}>Move</Fit>
      <Fit w={30} ml={21}>More</Fit>
      <Cell $w={6} $ml={3}><Caret c="#444" /></Cell>
    </Actions>
    <ReaderBody>
      <Article>
        <Line><Fit w={602}>avond mogen zijn, hebben we wel besloten om met de lessen en dansavonden in september weer te</Fit></Line>
        <Line>
          <Fit w={309}>beginnen. We willen nadrukkelijk dat iedereen zich </Fit><Fit w={40} as={Strong}>VEILIG</Fit>
          <Fit w={22}> en </Fit><Fit w={52.500} as={Strong}>PRETTIG</Fit><Fit w={177}> voelt bij het bezoeken van de</Fit>
        </Line>
        <Line>
          <Fit w={73}>dansschool. </Fit><Fit w={42} as={Strong}>Plezier</Fit><Fit w={21}> en </Fit>
          <Fit w={76} as={Strong}>gezelligheid</Fit><Fit w={411}> blijven het belangrijkste uitgangspunt! Wel is het mogelijk om vanaf</Fit>
        </Line>
        <Line>
          <Fit w={41.500}>heden </Fit><Fit w={47.500} as={StrongUnder}>priveles</Fit>
          <Fit w={520}> te boeken. Neem hiervoor contact op. Hieronder lees je alle belangrijke informatie over</Fit>
        </Line>
        <Line>
          <Fit w={445}>de seizoenstart in september. Voor de duidelijkheid: we schrijven iedereen </Fit>
          <Fit w={76} as={Under}>automatisch</Fit><Fit w={79.500}> door naar de</Fit>
        </Line>
        <Line><Fit w={605}>vervolgcursus in september. Hier hoef je niets voor te doen! Wil je dit niet? Geen probleem en laat het</Fit></Line>
        <Line><Fit w={64}>ons weten.</Fit></Line>
        <Block $mt={11.500}>
          <Line><Fit w={357.500} as={Strong}>1 september 2020 starten we weer met het najaarsseizoen</Fit></Line>
          <Line><Fit w={618}>- Het najaarsseizoen wordt eenmalig 14 weken. De extra lessen gebruiken we om de nieuwe stukken uit</Fit></Line>
          <Line>
            <Fit w={322}>het voorjaarseizoen in te halen. Houd voor het rooster </Fit><Fit w={144} as={Site}>www.groningendanst.nl</Fit>
            <Fit w={74}> in de gaten.</Fit>
          </Line>
          <Line><Fit w={410.500}>- Het cursusgeld wordt eenmalig verlaagd naar 100 euro per persoon</Fit></Line>
          <Line><Fit w={578}>- We schuiven iedereen door naar de vervolgcursus in september om gebruik te maken van deze</Fit></Line>
          <Line><Fit w={333.500}>regeling. Laat het ons weten indien dit niet gewenst is. (</Fit><Fit w={275} as="em">voorbeeld: danste je in het voorjaar beginners,</Fit></Line>
          <Line><Fit w={247} as="em">sta je nu ingeschreven in de Brons cursus</Fit><Fit w={7}>).</Fit></Line>
          <Line><Fit w={615}>- De eerste les op maandag zal op 31 augustus plaatsvinden om de genoemde 14 weken aan te kunnen</Fit></Line>
          <Line><Fit w={122}>bieden in het najaar.</Fit></Line>
        </Block>
        <Block $mt={11}>
          <Line><Fit w={198} as={Strong}>Alle dansvlogs inmiddels online!</Fit></Line>
          <Line><Fit w={527}>Heb je ze gemist? Kijk ze dan terug om lekker in de zomer nog thuis te kunnen oefenen:</Fit></Line>
        </Block>
        <Bullets>
          {videos.map((v) => (
            <BulletLine key={v.url}><Fit w={v.lw}>{v.label}</Fit><Fit w={v.w} as={Video}>{v.url}</Fit></BulletLine>
          ))}
        </Bullets>
      </Article>
      <Track><Thumb $top={131} $h={147} /></Track>
    </ReaderBody>
  </Reader>
);

export default function App() {
  return (
    <Desktop>
      <Global />
      <SystemBar />
      <Below>
        <Dock>
          {dockApps.map((a, i) => (
            <DockSlot key={i} $last={a.last}>
              <DockTile $active={a.active}>
                {a.dots && <DockDots>{Array.from({ length: a.dots }, (_, k) => <DockDot key={k} />)}</DockDots>}
                {a.icon}
              </DockTile>
            </DockSlot>
          ))}
        </Dock>
        <Window>
          <BrowserChrome />
          <MailHeader />
          <MailApp>
            <MailSidebar />
            <MessageList />
            <MailReader />
          </MailApp>
        </Window>
      </Below>
    </Desktop>
  );
}
